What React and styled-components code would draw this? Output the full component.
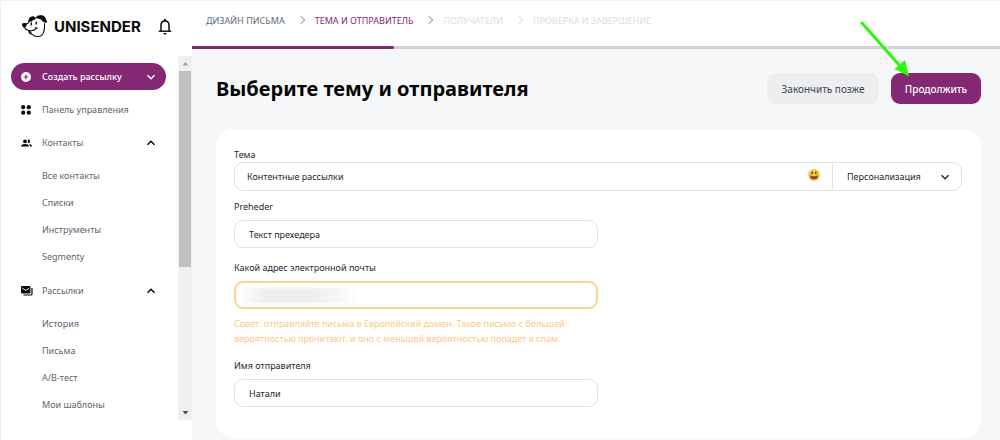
import React from "react";
import styled, { createGlobalStyle, css } from "styled-components";

const PURPLE = "#832873";
const AMBER = "#fbc981";

const Global = createGlobalStyle`
  * { box-sizing: border-box; }
  body {
    margin: 0;
    background: #f6f7f9;
    color: #25282d;
    font-family: "Noto Sans", "Open Sans", sans-serif;
    font-size: 9px;
  }
  button, input, select { font: inherit; color: inherit; }
`;

const Page = styled.div`
  display: flex;
  min-height: 100vh;
  border-top: 1px solid #f0f0f1;
`;

/* ---------- sidebar ---------- */

const Sidebar = styled.aside`
  flex: 0 0 192px;
  display: flex;
  flex-direction: column;
  background: #fff;
  border-left: 1px solid #f0f0f1;
`;

const Brand = styled.div`
  display: flex;
  align-items: center;
  justify-content: space-between;
  height: 55px;
  padding: 0 20px 4px 21px;
`;

const Logo = styled.a`
  display: flex;
  align-items: center;
  gap: 6px;
  color: #0b0b0b;
  font: 700 15px/20px Inter, "Noto Sans", sans-serif;
  text-decoration: none;
`;

const IconButton = styled.button`
  display: flex;
  padding: 0;
  border: 0;
  background: none;
  cursor: pointer;
`;

const ScrollArea = styled.div`
  display: flex;
  height: 364px;
`;

const Nav = styled.nav`
  flex: 1;
  padding: 7px 12px 0 10px;
`;

const CreateButton = styled.button`
  display: grid;
  grid-template-columns: 21px 1fr 10px;
  align-items: center;
  width: 100%;
  height: 27px;
  margin-bottom: 3px;
  padding: 0 10px;
  border: 0;
  border-radius: 14px;
  background: ${PURPLE};
  color: #fff;
  font-weight: 500;
  text-align: left;
  cursor: pointer;
`;

const NavLink = styled.a`
  display: grid;
  grid-template-columns: 21px 1fr 10px;
  align-items: center;
  height: 33px;
  padding: 0 10px;
  color: #60646e;
  text-decoration: none;
`;

const SubList = styled.ul`
  margin: 0;
  padding: 3px 0 4px 31px;
  list-style: none;
`;

const SubLink = styled.a`
  display: flex;
  align-items: center;
  height: 27px;
  color: #60646e;
  text-decoration: none;
`;

const Scrollbar = styled.div`
  flex: 0 0 14px;
  display: flex;
  flex-direction: column;
  align-items: center;
  background: #f0f0f0;
`;

const ScrollArrow = styled.svg`
  flex: 0 0 15px;
  width: 13px;
`;

const Thumb = styled.div`
  width: 12px;
  height: 196px;
  background: #c1c1c1;
`;

const Gutter = styled.div`
  flex: 1;
`;

/* ---------- main column ---------- */

const Main = styled.main`
  flex: 1;
  min-width: 0;
`;

const Steps = styled.ol`
  display: flex;
  align-items: center;
  height: 45px;
  margin: 0;
  padding: 0 14px 7px;
  background: #fff;
  list-style: none;
`;

const stepColors = { done: "#5f6b7a", current: PURPLE, next: "#dcdde1" };

const Step = styled.li`
  display: flex;
  align-items: center;
  color: ${(p) => stepColors[p.$state]};

  &:not(:first-child)::before {
    content: "";
    width: 5px;
    height: 5px;
    margin: 0 11px 0 13px;
    border: solid ${(p) => (p.$last ? "#dcdde1" : "#a0a4ab")};
    border-width: 1px 1px 0 0;
    rotate: 45deg;
  }
`;

const Progress = styled.div`
  height: 3px;
  background: #d2d3d5;
`;

const ProgressFill = styled.div`
  width: 25%;
  height: 100%;
  border-radius: 0 2px 2px 0;
  background: ${PURPLE};
`;

const Content = styled.div`
  padding: 24px 19px 2px 24px;
`;

const TitleRow = styled.div`
  display: flex;
  align-items: center;
  justify-content: space-between;
  margin-bottom: 25px;
`;

const Title = styled.h1`
  margin: 0;
  color: #050505;
  font-size: 20px;
  line-height: 31px;
`;

const Actions = styled.div`
  display: flex;
  gap: 12px;
  position: relative;
`;

const ActionButton = styled.button`
  height: 31px;
  padding: 0 12px;
  border: 0;
  border-radius: 9px;
  background: #edeef0;
  color: #3d4552;
  font-size: 10px;
  min-width: 112px;
  cursor: pointer;

  ${(p) =>
    p.$primary &&
    css`
      min-width: 90px;
      background: ${PURPLE};
      color: #fff;
      font-weight: 500;
    `}
`;

const Pointer = styled.svg`
  position: absolute;
  right: 70px;
  bottom: 27px;
  pointer-events: none;
`;

const Card = styled.form`
  padding: 18px 19px 31px 18px;
  border-radius: 18px;
  background: #fff;
`;

const Field = styled.div`
  max-width: ${(p) => (p.$wide ? "none" : "364px")};
  margin-bottom: ${(p) => (p.$wide ? "8px" : "12px")};

  &:last-child { margin-bottom: 0; }
`;

const Label = styled.label`
  display: block;
  margin-bottom: ${(p) => (p.$tight ? "0" : "6px")};
  line-height: 15px;
`;

const Input = styled.input`
  display: block;
  width: 100%;
  height: 28px;
  padding: 0 14px;
  border: ${(p) => (p.$warn ? "2px solid #fbd396" : "1px solid #dfe1e4")};
  border-radius: 9px;
  background: #fff;
  outline: 0;
`;

const SplitInput = styled.div`
  display: flex;
  height: 29px;
  border: 1px solid #dfe1e4;
  border-radius: 9px;
  background: #fff;
`;

const BareInput = styled.input`
  flex: 1;
  min-width: 0;
  padding: 0 12px;
  border: 0;
  background: none;
  outline: 0;
`;

const EmojiButton = styled(IconButton)`
  align-items: center;
  padding: 0 12px 3px 0;
`;

const SelectWrap = styled.div`
  flex: 0 0 129px;
  display: grid;
  align-items: center;
  border-left: 1px solid #dfe1e4;

  > * { grid-area: 1 / 1; }
  > svg { justify-self: end; margin-right: 11px; pointer-events: none; }
`;

const Select = styled.select`
  width: 100%;
  height: 100%;
  padding: 0 14px;
  border: 0;
  appearance: none;
  background: none;
  outline: 0;
`;

const Masked = styled.div`
  position: relative;
`;

const Mask = styled.span`
  position: absolute;
  top: 7px;
  left: 8px;
  width: 116px;
  height: 15px;
  background: linear-gradient(90deg, #fbfbfb, #eeeeef 22%, #eeeeef 60%, #f5f5f5 80%, #fff);
  filter: blur(1px);
`;

const Hint = styled.p`
  margin: 7px 0 0;
  color: ${AMBER};
  line-height: 15px;
`;

/* ---------- icons ---------- */

const Chevron = ({ up, color = "#0c0c0c" }) => (
  <svg width="10" height="10" viewBox="0 0 10 10" fill="none" stroke={color} strokeWidth="1.5" aria-hidden="true">
    <path d={up ? "M1.5 6.8 5 3.3l3.5 3.5" : "M1.5 3.2 5 6.7l3.5-3.5"} />
  </svg>
);

const DogIcon = () => (
  <svg width="26" height="24" viewBox="0 0 26 24" fill="none" stroke="#0b0b0b" strokeWidth="1.1" strokeLinejoin="round" strokeLinecap="round" aria-hidden="true">
    <path d="M7.500 5.500 6 8.300 3 9.500M2 12c1 2.200 2.800 3 5 3.500M7 16.500c0 2.200 1.500 2.700 3.400 3 2.200 2.600 7 2.800 9.800.3 2.600-2.600 2.500-6.300 2.300-11.300" />
    <path d="M7 15.500c3.200.6 6-.3 7.400-2.500M13.600 12.400l1.500.9M7.200 16.200l2 1.400M12.300 3.300l3.200-.9" />
    <path d="M7 6.200C6.900 3.300 8.500 1.700 11.800 1.700l1 2.300c-1.600.4-2.700 1-3.300 1.900Z" fill="#0b0b0b" />
    <path d="M15.300 1.300c3-.8 5.900-.5 7 .7 1.100 1.500 1.700 3.200 2.200 5.200-2.200.1-3.500-.6-4.700-2.500-.8-1-2.200-1.500-4-1.700Z" fill="#0b0b0b" />
    <path d="M.7 9c1.300-.7 2.700-.5 3.700.3-.4 1.700-1.300 2.500-2.500 2.600C1 11.300.4 10.200.7 9Z" fill="#0b0b0b" />
    <path d="M9.300 8v1.800M14.300 7.200V9" strokeWidth="1.400" />
  </svg>
);

const BellIcon = () => (
  <svg width="14" height="17" viewBox="0 0 14 17" fill="none" stroke="#0b0b0b" strokeWidth="1.500" aria-hidden="true">
    <path d="M3 13V7.300C3 4.600 4.700 3 7 3s4 1.600 4 4.300V13" />
    <path d="M.7 13.200h12.600" strokeWidth="1.400" />
    <path d="M7 3V1" strokeWidth="2" />
    <path d="M5.400 15h3.200c-.2 1-.8 1.500-1.600 1.500S5.600 16 5.400 15Z" fill="#0b0b0b" stroke="none" />
  </svg>
);

const PlusIcon = () => (
  <svg width="10" height="10" viewBox="0 0 10 10" aria-hidden="true">
    <circle cx="5" cy="5" r="5" fill="#fff" />
    <path d="M5 2.700v4.600M2.700 5h4.600" stroke={PURPLE} strokeWidth="1.200" />
  </svg>
);

const DotsIcon = () => (
  <svg width="10" height="10" viewBox="0 0 10 10" fill="#0b0b0b" aria-hidden="true">
    <circle cx="2.200" cy="2.200" r="2.100" />
    <circle cx="7.800" cy="2.200" r="2.100" />
    <circle cx="2.200" cy="7.700" r="2.100" />
    <circle cx="7.800" cy="7.700" r="2.100" />
  </svg>
);

const PeopleIcon = () => (
  <svg width="11" height="10" viewBox="0 0 11 10" fill="#0b0b0b" aria-hidden="true">
    <circle cx="4" cy="3.300" r="1.900" />
    <path d="M0 8.500C0 6.700 1.800 6 4 6s4 .7 4 2.500Z" />
    <path d="M6.600 1.700a1.800 1.800 0 1 1 0 3.200c.5-1 .5-2.200 0-3.200ZM8 6c2 .2 3 1 3 2.500H8.900C8.900 7.300 8.600 6.600 8 6Z" />
  </svg>
);

const MailIcon = () => (
  <svg width="12" height="11" viewBox="0 0 12 11" aria-hidden="true">
    <rect x="0" y="1" width="9.500" height="7.500" rx="1" fill="#0b0b0b" />
    <path d="m1.300 3.200 3.500 2.300 3.400-2.300" fill="none" stroke="#fff" strokeWidth=".9" />
    <path d="M11 3v6q0 1-1 1H2.500" fill="none" stroke="#0b0b0b" strokeWidth="1.200" />
  </svg>
);

const SmileIcon = () => (
  <svg width="12" height="12" viewBox="0 0 12 12" aria-hidden="true">
    <circle cx="6" cy="6" r="5.900" fill="#f8c73c" />
    <ellipse cx="4.200" cy="3.900" rx=".8" ry="1.400" fill="#5d3b12" />
    <ellipse cx="7.800" cy="3.900" rx=".8" ry="1.400" fill="#5d3b12" />
    <path d="M2 6.500c2.600.8 5.400.8 8 0-.1 2.600-1.700 4.100-4 4.100s-3.900-1.500-4-4.100Z" fill="#6b3d14" />
    <path d="M4.200 9.500c1.100-.7 2.500-.7 3.600 0-1 .8-2.600.8-3.600 0Z" fill="#d9603f" />
    <path d="M3.200 7.200c1.900.4 3.700.4 5.600 0l-.3.600h-5Z" fill="#f3e3c0" />
  </svg>
);

/* ---------- data ---------- */

const sections = [
  { title: "Панель управления", icon: <DotsIcon /> },
  {
    title: "Контакты",
    icon: <PeopleIcon />,
    items: ["Все контакты", "Списки", "Инструменты", "Segmenty"],
  },
  {
    title: "Рассылки",
    icon: <MailIcon />,
    items: ["История", "Письма", "A/B-тест", "Мои шаблоны"],
  },
];

const steps = [
  ["ДИЗАЙН ПИСЬМА", "done"],
  ["ТЕМА И ОТПРАВИТЕЛЬ", "current"],
  ["ПОЛУЧАТЕЛИ", "next"],
  ["ПРОВЕРКА И ЗАВЕРШЕНИЕ", "next"],
];

export default function App() {
  return (
    <>
      <Global />
      <Page>
        <Sidebar>
          <Brand>
            <Logo href="#">
              <DogIcon />
              UNISENDER
            </Logo>
            <IconButton type="button" aria-label="Уведомления">
              <BellIcon />
            </IconButton>
          </Brand>
          <ScrollArea>
            <Nav>
              <CreateButton type="button">
                <PlusIcon />
                Создать рассылку
                <Chevron color="#fff" />
              </CreateButton>
              {sections.map((s) => (
                <React.Fragment key={s.title}>
                  <NavLink href="#">
                    {s.icon}
                    {s.title}
                    {s.items && <Chevron up />}
                  </NavLink>
                  {s.items && (
                    <SubList>
                      {s.items.map((i) => (
                        <li key={i}>
                          <SubLink href="#">{i}</SubLink>
                        </li>
                      ))}
                    </SubList>
                  )}
                </React.Fragment>
              ))}
            </Nav>
            <Scrollbar aria-hidden="true">
              <ScrollArrow viewBox="0 0 13 15" fill="#a0a0a0">
                <path d="M3.500 9.500h6l-3-3.500Z" />
              </ScrollArrow>
              <Thumb />
              <Gutter />
              <ScrollArrow viewBox="0 0 13 15" fill="#4c4c4c">
                <path d="M3.500 6h6l-3 3.500Z" />
              </ScrollArrow>
            </Scrollbar>
          </ScrollArea>
        </Sidebar>

        <Main>
          <Steps>
            {steps.map(([name, state], i) => (
              <Step key={name} $state={state} $last={i === steps.length - 1}>
                {name}
              </Step>
            ))}
          </Steps>
          <Progress>
            <ProgressFill />
          </Progress>

          <Content>
            <TitleRow>
              <Title>Выберите тему и отправителя</Title>
              <Actions>
                <ActionButton type="button">Закончить позже</ActionButton>
                <ActionButton type="submit" form="sender" $primary>
                  Продолжить
                </ActionButton>
                <Pointer width="52" height="56" viewBox="0 0 52 56" aria-hidden="true">
                  <path d="M3 2 41 45" stroke="#2cf80c" strokeWidth="3" strokeLinecap="round" />
                  <path d="M50 55.500 35.500 48 46 39Z" fill="#2cf80c" />
                </Pointer>
              </Actions>
            </TitleRow>

            <Card id="sender" onSubmit={(e) => e.preventDefault()}>
              <Field $wide>
                <Label $tight htmlFor="subject">Тема</Label>
                <SplitInput>
                  <BareInput id="subject" defaultValue="Контентные рассылки" />
                  <EmojiButton type="button" aria-label="Эмодзи">
                    <SmileIcon />
                  </EmojiButton>
                  <SelectWrap>
                    <Select aria-label="Персонализация">
                      <option>Персонализация</option>
                    </Select>
                    <Chevron color="#25282d" />
                  </SelectWrap>
                </SplitInput>
              </Field>
              <Field>
                <Label htmlFor="preheader">Preheder</Label>
                <Input id="preheader" defaultValue="Текст прехедера" />
              </Field>
              <Field>
                <Label htmlFor="email">Какой адрес электронной почты</Label>
                <Masked>
                  <Input id="email" type="email" $warn />
                  <Mask />
                </Masked>
                <Hint>
                  Совет: отправляйте письма в Европейский домен. Такое письмо с большей
                  вероятностью прочитают, и оно с меньшей вероятностью попадет в спам.
                </Hint>
              </Field>
              <Field>
                <Label htmlFor="name">Имя отправителя</Label>
                <Input id="name" defaultValue="Натали" />
              </Field>
            </Card>
          </Content>
        </Main>
      </Page>
    </>
  );
}
